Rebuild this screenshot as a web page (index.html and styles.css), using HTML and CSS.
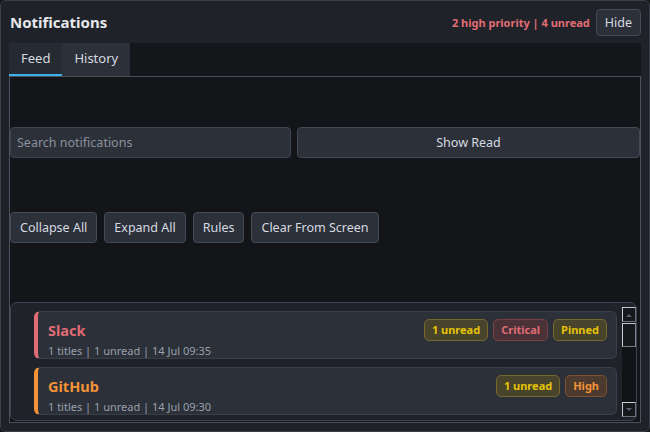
FILE: index.html
```html
<!DOCTYPE html>
<html lang="en">
<head>
    <meta charset="UTF-8">
    <title>Notifications</title>
    <link rel="stylesheet" href="styles.css">
</head>
<body>
    <div class="panel">
        <header class="panel-head">
            <h1>Notifications</h1>
            <div class="head-right">
                <span class="summary">2 high priority | 4 unread</span>
                <button class="btn">Hide</button>
            </div>
        </header>

        <nav class="tabs">
            <div class="tab-group">
                <div class="tab active">Feed</div>
                <div class="tab">History</div>
            </div>
        </nav>

        <section class="pane">
            <div class="search-row">
                <input class="search" type="text" placeholder="Search notifications">
                <button class="btn wide">Show Read</button>
            </div>

            <div class="actions">
                <button class="btn">Collapse All</button>
                <button class="btn">Expand All</button>
                <button class="btn">Rules</button>
                <button class="btn">Clear From Screen</button>
            </div>

            <div class="list">
                <div class="cards">
                    <div class="card critical">
                        <div class="card-body">
                            <div class="card-title">Slack</div>
                            <div class="card-meta">1 titles | 1 unread | 14 Jul 09:35</div>
                        </div>
                        <div class="badges">
                            <span class="badge yellow">1 unread</span>
                            <span class="badge red">Critical</span>
                            <span class="badge yellow">Pinned</span>
                        </div>
                    </div>
                    <div class="card high">
                        <div class="card-body">
                            <div class="card-title">GitHub</div>
                            <div class="card-meta">1 titles | 1 unread | 14 Jul 09:30</div>
                        </div>
                        <div class="badges">
                            <span class="badge yellow">1 unread</span>
                            <span class="badge orange">High</span>
                        </div>
                    </div>
                </div>
                <div class="scrollbar">
                    <div class="sb-btn">
                        <svg width="6" height="4" viewBox="0 0 6 4"><path d="M0 4 L3 1 L6 4 Z" fill="#5c6370"/></svg>
                    </div>
                    <div class="sb-thumb"></div>
                    <div class="sb-track"></div>
                    <div class="sb-btn">
                        <svg width="6" height="4" viewBox="0 0 6 4"><path d="M0 0 L3 3 L6 0 Z" fill="#5c6370"/></svg>
                    </div>
                </div>
            </div>
        </section>
    </div>
</body>
</html>
```

FILE: styles.css
```css
* {
    box-sizing: border-box;
}

body {
    margin: 0;
    padding: 0;
    background-color: #15171b;
    font-family: 'Noto Sans', 'Open Sans', sans-serif;
    color: #d7dae0;
}

.panel {
    width: 650px;
    height: 432px;
    background-color: #1f2329;
    border: 1px solid #3b404a;
    border-radius: 6px;
    padding: 0 8px;
    display: flex;
    flex-direction: column;
}

.panel-head {
    display: flex;
    align-items: center;
    justify-content: space-between;
    height: 42px;
    flex-shrink: 0;
    padding-left: 1px;
}

.panel-head h1 {
    margin: 0;
    font-size: 15px;
    font-weight: 700;
    color: #e6e8ec;
}

.head-right {
    display: flex;
    align-items: center;
    gap: 6px;
}

.summary {
    color: #e06c75;
    font-size: 11px;
    font-weight: 700;
}

.btn {
    font-family: inherit;
    font-size: 12.5px;
    color: #d7dae0;
    background-color: #2b3039;
    border: 1px solid #444b57;
    border-radius: 4px;
    height: 27px;
    padding: 0 8px;
    cursor: pointer;
}

.tabs {
    height: 33px;
    flex-shrink: 0;
    background-color: #15171b;
    display: flex;
}

.tab-group {
    display: flex;
    background-color: #2b3039;
}

.tab {
    font-size: 13px;
    padding: 0 12px;
    line-height: 31px;
    border-bottom: 2px solid transparent;
    color: #d7dae0;
}

.tab.active {
    border-bottom-color: #3daee9;
    background-color: #262b33;
}

.pane {
    flex: 1;
    background-color: #131519;
    border: 1px solid #4a505c;
    margin-bottom: 8px;
    display: flex;
    flex-direction: column;
}

.pane > * {
    flex-shrink: 0;
}

.search-row {
    display: flex;
    gap: 6px;
    margin-top: 50px;
}

.search {
    width: 281px;
    height: 31px;
    font-family: inherit;
    font-size: 12.5px;
    color: #d7dae0;
    background-color: #2b3039;
    border: 1px solid #3e4450;
    border-radius: 4px;
    padding: 0 6px;
}

.search::placeholder {
    color: #8a909c;
}

.btn.wide {
    flex: 1;
    height: 31px;
}

.actions {
    display: flex;
    gap: 7px;
    margin-top: 54px;
}

.actions .btn {
    height: 31px;
    padding: 0 9px;
}

.list {
    margin-top: 59px;
    margin-right: 3px;
    height: 119px;
    background-color: #1f2329;
    border: 1px solid #3e4450;
    border-radius: 7px;
    display: flex;
    padding: 4px 0 3px 23px;
}

.cards {
    flex: 1;
    display: flex;
    flex-direction: column;
    gap: 8px;
    padding-top: 4px;
}

.card {
    height: 48px;
    flex-shrink: 0;
    background-color: #2b3039;
    border: 1px solid #3a404b;
    border-radius: 6px;
    border-left: 4px solid #e06c75;
    display: flex;
    align-items: flex-start;
    justify-content: space-between;
    padding: 7px 9px 0 10px;
}

.card.high {
    border-left-color: #f39237;
}

.card-body {
    padding-top: 1px;
}

.card-title {
    font-size: 14.5px;
    font-weight: 700;
    line-height: 20px;
    color: #e06c75;
}

.card.high .card-title {
    color: #f39237;
}

.card-meta {
    font-size: 11px;
    color: #9aa0ab;
    line-height: 15px;
    margin-top: 3px;
}

.badges {
    display: flex;
    gap: 5px;
}

.badge {
    font-size: 11px;
    font-weight: 700;
    line-height: 20px;
    padding: 0 7px;
    border-radius: 5px;
    border: 1px solid;
}

.badge.yellow {
    color: #e5c307;
    background-color: #47442b;
    border-color: #77692c;
}

.badge.red {
    color: #e06c75;
    background-color: #4a3238;
    border-color: #7a4048;
}

.badge.orange {
    color: #f39237;
    background-color: #4c3a2f;
    border-color: #7c5033;
}

.scrollbar {
    width: 14px;
    margin-left: 5px;
    background-color: #111316;
    display: flex;
    flex-direction: column;
}

.sb-btn {
    height: 15px;
    border: 1px solid #c8ccd2;
    border-right-color: #6a707a;
    border-bottom-color: #6a707a;
    background-color: #16181c;
    display: flex;
    align-items: center;
    justify-content: center;
}

.sb-thumb {
    height: 24px;
    border: 1px solid #c8ccd2;
    border-right-color: #7a808a;
    border-bottom-color: #7a808a;
    background-color: #16181c;
    margin-top: 1px;
}

.sb-track {
    flex: 1;
}
```
